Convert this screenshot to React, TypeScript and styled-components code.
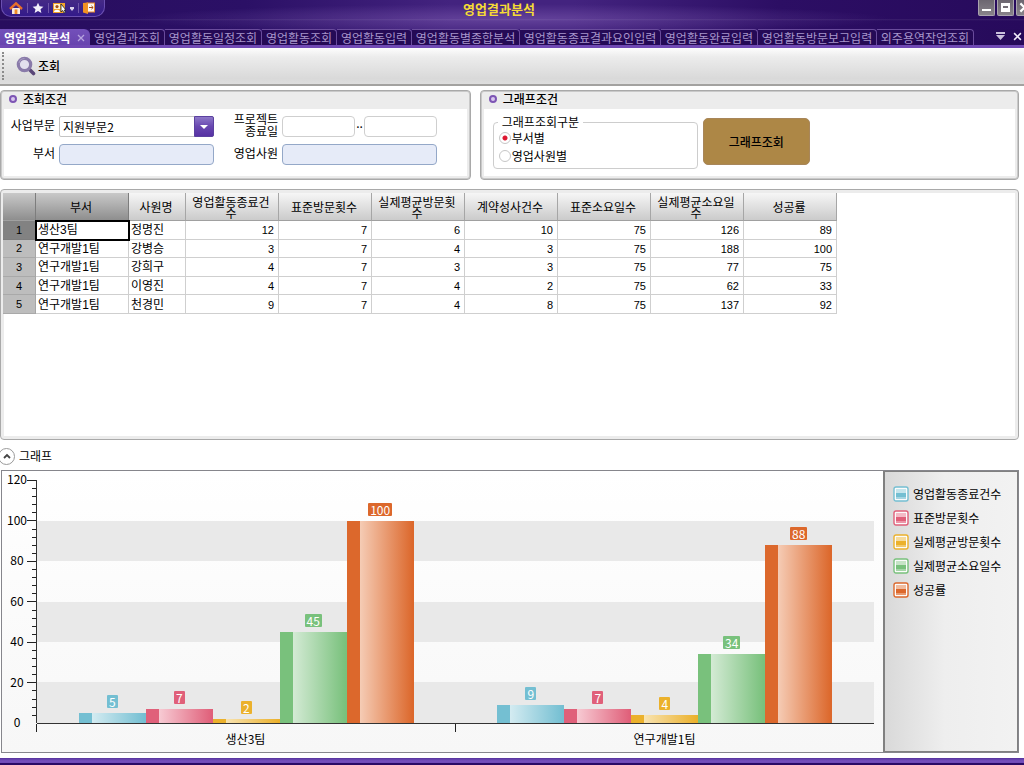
import React, { useState } from "react";
import styled, { createGlobalStyle } from "styled-components";

const GlobalStyle = createGlobalStyle`
  * { box-sizing: border-box; }
  html, body { margin: 0; padding: 0; }
  body {
    background: #fff;
    color: #000;
    font-family: "Noto Sans CJK KR", "Noto Sans", sans-serif;
    font-size: 12px;
    line-height: 14px;
    overflow-x: hidden;
  }
  button, input, select { font: inherit; color: inherit; margin: 0; }
`;

/* ---------- data ---------- */

const tabs = [
  "영업결과조회",
  "영업활동일정조회",
  "영업활동조회",
  "영업활동입력",
  "영업활동별종합분석",
  "영업활동종료결과요인입력",
  "영업활동완료입력",
  "영업활동방문보고입력",
  "외주용역작업조회",
];

const headers = [
  "부서",
  "사원명",
  "영업활동종료건수",
  "표준방문횟수",
  "실제평균방문횟수",
  "계약성사건수",
  "표준소요일수",
  "실제평균소요일수",
  "성공률",
];

const rows: [string, string, ...number[]][] = [
  ["생산3팀", "정명진", 12, 7, 6, 10, 75, 126, 89],
  ["연구개발1팀", "강병승", 3, 7, 4, 3, 75, 188, 100],
  ["연구개발1팀", "강희구", 4, 7, 3, 3, 75, 77, 75],
  ["연구개발1팀", "이영진", 4, 7, 4, 2, 75, 62, 33],
  ["연구개발1팀", "천경민", 9, 7, 4, 8, 75, 137, 92],
];

const series = [
  { name: "영업활동종료건수", color: "#74bfd2", light: "#d3ebf1" },
  { name: "표준방문횟수", color: "#e0607a", light: "#f7cad3" },
  { name: "실제평균방문횟수", color: "#ebb12c", light: "#f8e3b0" },
  { name: "실제평균소요일수", color: "#79c17c", light: "#d3ead4" },
  { name: "성공률", color: "#dc682c", light: "#f5cbb4" },
];

const groups = [
  { name: "생산3팀", values: [5, 7, 2, 45, 100] },
  { name: "연구개발1팀", values: [9, 7, 4, 34, 88] },
];

const axisMax = 120;
const axisSteps = [120, 100, 80, 60, 40, 20];

/* ---------- frame ---------- */

const Page = styled.div`
  display: flex;
  flex-direction: column;
  min-height: 100vh;
`;

const TitleBar = styled.header`
  display: grid;
  grid-template-columns: 1fr auto 1fr;
  height: 29px;
  overflow: hidden;
  background:
    linear-gradient(transparent 19px, rgba(255, 255, 255, 0.08) 19px, transparent 21px),
    radial-gradient(ellipse 380px 15px at 50% 19px, rgba(130, 95, 180, 0.5), transparent),
    linear-gradient(90deg, #280d5e 0%, #2b1066 24%, #43237f 44%, #43237f 56%, #2c0e64 76%, #270a5c 100%);
`;

const QuickBar = styled.nav`
  display: flex;
  align-items: center;
  justify-self: start;
  width: 104px;
  height: 17px;
  margin-left: 1px;
  padding: 0 7px;
  gap: 4px;
  border: 1px solid #6a4fb0;
  border-top: 0;
  border-radius: 0 0 10px 10px;
  background: linear-gradient(#452a86, #331a8a);
`;

const QuickButton = styled.button`
  display: flex;
  padding: 0;
  border: 0;
  background: none;
`;

const QuickDivider = styled.span`
  width: 1px;
  height: 10px;
  background: #6f55a8;
`;

const WindowTitle = styled.h1`
  margin: 0;
  padding-right: 26px;
  font-size: 13px;
  line-height: 17px;
  font-weight: 700;
  color: #f6dc35;
`;

const WindowButtons = styled.div`
  display: flex;
  justify-self: end;
  gap: 2px;
  margin-right: -9px;
`;

const WindowButton = styled.button`
  display: flex;
  align-items: center;
  justify-content: center;
  width: 17px;
  height: 16px;
  padding: 0;
  border: 1px solid #aaa3ae;
  border-top: 0;
  border-radius: 0 0 2px 2px;
  background: linear-gradient(#6c6670, #88838a);
`;

const TabStrip = styled.nav`
  display: flex;
  align-items: flex-start;
  height: 19px;
  background: linear-gradient(90deg, #2d1068, #3a1b78 50%, #260a5a);
  border-bottom: 3px solid #7049b4;
  overflow: hidden;
`;

const ActiveTab = styled.div`
  display: flex;
  align-items: center;
  justify-content: space-between;
  width: 90px;
  height: 16px;
  flex: none;
  padding: 2px 5px 0 4px;
  border-radius: 0 6px 0 0;
  background: linear-gradient(#7350ba, #6844ae);
  color: #fff;
  font-weight: 700;
  white-space: nowrap;
`;

const TabClose = styled.button`
  display: flex;
  padding: 0;
  border: 0;
  background: none;
`;

const Tab = styled.a<{ $chars: number }>`
  flex: none;
  width: ${(p) => p.$chars * 11 + 9}px;
  height: 16px;
  padding-top: 1px;
  border: 1px solid #6a4c9c;
  border-width: 1px 1px 0 0;
  border-radius: 0 4px 0 0;
  background: #250a56;
  color: #a795cb;
  text-align: center;
  text-decoration: none;
  white-space: nowrap;
`;

const TabTools = styled.div`
  display: flex;
  gap: 8px;
  margin-left: auto;
  padding: 3px 2px 0 0;
`;

const Toolbar = styled.div`
  display: flex;
  align-items: center;
  height: 38px;
  padding-left: 2px;
  background: linear-gradient(#fdfdfd, #ececec 25%, #d9d9d9 85%, #dedede);
  border-bottom: 2px solid #a3a2a0;
`;

const Grip = styled.span`
  height: 28px;
  width: 14px;
  border-left: 2px dotted #8b8b8b;
`;

const ToolbarButton = styled.button`
  display: flex;
  align-items: center;
  gap: 2px;
  padding: 0;
  border: 0;
  background: none;
  font-weight: 500;
`;

const Main = styled.main`
  display: flex;
  flex: 1;
  flex-direction: column;
  padding: 4px 5px 5px 0;
`;

const BottomBar = styled.footer`
  height: 7px;
  background: linear-gradient(#55319c, #7650be 3px, #6f48b6 5px, #2a0a66 5px);
`;

/* ---------- condition panels ---------- */

const Conditions = styled.div`
  display: flex;
  gap: 9px;
  margin-bottom: 9px;
`;

const Panel = styled.section<{ $basis?: string }>`
  flex: ${(p) => (p.$basis ? `0 0 ${p.$basis}` : "1")};
  min-width: 0;
  padding: 0 3px 3px;
  border: 1px solid #a9a9a9;
  border-radius: 4px;
  background: #ececec;
  box-shadow: inset 0 0 0 1px #c9c9c9;
`;

const PanelTitle = styled.h2`
  display: flex;
  align-items: center;
  gap: 6px;
  height: 18px;
  margin: 0;
  padding: 0 0 2px 5px;
  font-size: 12px;
  font-weight: 500;
`;

const Bullet = styled.span`
  width: 8px;
  height: 8px;
  border: 2px solid #7d55b4;
  border-radius: 50%;
  background: #d9c8ee;
`;

const PanelBody = styled.div`
  height: 67px;
  background: #fff;
`;

const SearchForm = styled(PanelBody)`
  display: grid;
  grid-template-columns: 45px 155px 60px 155px;
  grid-template-rows: 21px 21px;
  gap: 7px 4px;
  align-items: center;
  padding: 7px 0 0 6px;
`;

const FieldLabel = styled.label`
  padding-bottom: 3px;
  line-height: 12px;
  text-align: right;
  word-break: keep-all;
`;

const TextField = styled.input<{ $lookup?: boolean }>`
  width: 100%;
  min-width: 0;
  height: 21px;
  padding: 0 4px;
  border: 1px solid ${(p) => (p.$lookup ? "#94a8c8" : "#cfcfcf")};
  border-radius: 4px;
  background: ${(p) => (p.$lookup ? "#e6ebf8" : "#fff")};
`;

const DateRange = styled.div`
  display: grid;
  grid-template-columns: 1fr 9px 1fr;
  text-align: center;
`;

const SelectBox = styled.div`
  position: relative;
`;

const Select = styled.select`
  display: block;
  width: 100%;
  height: 21px;
  padding: 0 24px 0 3px;
  border: 1px solid #c4c4c4;
  border-radius: 2px;
  background: #fff;
  appearance: none;
`;

const SelectArrow = styled.span`
  position: absolute;
  top: 0;
  right: 0;
  display: flex;
  align-items: center;
  justify-content: center;
  width: 20px;
  height: 21px;
  border: 1px solid #5b41a0;
  border-radius: 0 2px 2px 0;
  background: linear-gradient(#8d78c8, #6847b0 50%, #5732a4);
  pointer-events: none;
`;

const GraphForm = styled(PanelBody)`
  display: flex;
  gap: 5px;
  padding: 6px 0 0 9px;
`;

const RadioGroup = styled.fieldset`
  width: 205px;
  height: 54px;
  margin: 0;
  padding: 0 5px;
  border: 1px solid #cdcdcd;
  border-radius: 4px;
`;

const Legend = styled.legend`
  padding: 0 4px;
  margin-left: -1px;
`;

const RadioLabel = styled.label`
  display: flex;
  align-items: center;
  gap: 1px;
  height: 18px;
`;

const Radio = styled.input`
  appearance: none;
  width: 12px;
  height: 12px;
  border: 1px solid #c6c6c6;
  border-radius: 50%;
  background: #fff;
  &:checked {
    background: radial-gradient(circle, #dd1730 0 2px, #fff 3px);
  }
`;

const GraphButton = styled.button`
  width: 107px;
  height: 47px;
  margin-top: 3px;
  border: 1px solid #a8865a;
  border-radius: 5px;
  background: #ad8746;
  font-weight: 500;
`;

/* ---------- data grid ---------- */

const GridPanel = styled.section`
  flex: 1;
  min-height: 251px;
  padding: 3px 2px 2px;
  border: 1px solid #a9a9a9;
  border-radius: 4px;
  background: #fff;
  box-shadow: inset 0 0 0 3px #ececec;
`;

const Table = styled.table`
  width: 834px;
  height: 121px;
  table-layout: fixed;
  border-collapse: separate;
  border-spacing: 0;
`;

const HeadCell = styled.th<{ $w: number; $dark?: boolean }>`
  width: ${(p) => p.$w}px;
  height: 28px;
  padding: 0 5px 0 3px;
  border-right: 1px solid ${(p) => (p.$dark ? "#7d7d7d" : "#a6a6a6")};
  border-bottom: 1px solid #a0a0a0;
  background: ${(p) =>
    p.$dark ? "linear-gradient(#c9c9c9, #8e8e8e)" : "linear-gradient(#f6f6f6, #cbcbcb)"};
  font-weight: 400;
  line-height: 11px;
  word-break: break-all;
`;

const RowHead = styled.th<{ $current?: boolean }>`
  padding: 0;
  border-right: 1px solid #a6a6a6;
  border-bottom: 1px solid ${(p) => (p.$current ? "#7d7d7d" : "#a9a9a9")};
  background: ${(p) => (p.$current ? "#828282" : "#bdbdbd")};
  font: 400 11px/14px "Liberation Sans", sans-serif;
`;

const Cell = styled.td<{ $num?: boolean; $focus?: boolean }>`
  padding: ${(p) => (p.$num ? "1px 4px 0" : "1px 2px 0")};
  border-right: 1px solid #cfcfcf;
  border-bottom: 1px solid #cfcfcf;
  outline: ${(p) => (p.$focus ? "2px solid #000" : "none")};
  outline-offset: -1px;
  font-family: "Liberation Sans", "Noto Sans CJK KR", sans-serif;
  font-size: ${(p) => (p.$num ? 11 : 12)}px;
  text-align: ${(p) => (p.$num ? "right" : "left")};
  white-space: nowrap;
`;

/* ---------- chart ---------- */

const GraphTitle = styled.h2`
  display: flex;
  align-items: center;
  gap: 4px;
  height: 30px;
  margin: 0 0 0 -2px;
  padding-top: 2px;
  font-size: 12px;
  font-weight: 400;
`;

const CollapseButton = styled.button`
  display: flex;
  align-items: center;
  justify-content: center;
  width: 17px;
  height: 17px;
  padding: 0;
  border: 1px solid #9a9a9a;
  border-radius: 50%;
  background: #fff;
`;

const ChartPanel = styled.section`
  display: flex;
  margin-left: 1px;
  border: 1px solid #86868c;
  background: linear-gradient(#fff, #f7f7f7);
`;

const ChartArea = styled.div`
  display: flex;
  flex: 1;
  padding: 9px 9px 0 0;
`;

const ValueAxis = styled.div`
  display: flex;
  flex-direction: column;
  width: 26px;
  height: 243px;
  padding-left: 4px;
  text-align: center;
`;

const AxisLabel = styled.span`
  flex: 1;
  margin-top: -8px;
  margin-bottom: 8px;
`;

const AxisZero = styled.span`
  height: 0;
  margin-top: -8px;
  margin-bottom: 8px;
`;

const Ticks = styled.div`
  display: flex;
  flex-direction: column;
  align-items: flex-end;
  width: 9px;
  height: 243px;
  border-right: 1px solid #333;
`;

const Tick = styled.span<{ $major: boolean }>`
  flex: 1;
  width: ${(p) => (p.$major ? 9 : 4)}px;
  border-top: 1px solid #222;
`;

const PlotColumn = styled.div`
  flex: 1;
`;

const Plot = styled.div`
  display: flex;
  height: 244px;
  border-bottom: 1px solid #333;
  background: repeating-linear-gradient(
    to top,
    #e9e9e9 0 calc(100% / 6),
    transparent calc(100% / 6) calc(100% / 3)
  );
`;

const BarGroup = styled.div`
  display: flex;
  flex: 1;
  min-width: 0;
  padding: 0 5%;
`;

const BarSlot = styled.div`
  display: flex;
  flex: 1;
  flex-direction: column;
  align-items: center;
  justify-content: flex-end;
`;

const BarValue = styled.span<{ $color: string }>`
  flex: none;
  margin-bottom: 5px;
  padding: 0 2px;
  border-radius: 1px;
  line-height: 13px;
  background: ${(p) => p.$color};
  color: #fff;
`;

const Bar = styled.div<{ $color: string; $light: string }>`
  flex: none;
  width: 100%;
  background: linear-gradient(
    90deg,
    ${(p) => p.$color} 19%,
    ${(p) => p.$light} 20%,
    ${(p) => p.$color} 98%
  );
`;

const CategoryAxis = styled.div`
  display: flex;
  margin-left: -1px;
`;

const Category = styled.div`
  flex: 1;
  height: 28px;
  padding-top: 8px;
  text-align: center;
  background: linear-gradient(#222, #222) 0 0 / 1px 8px no-repeat;
`;

const SeriesLegend = styled.ul`
  display: flex;
  flex-direction: column;
  gap: 10px;
  width: 135px;
  margin: 0;
  padding: 15px 0 0 8px;
  border: 2px solid #808080;
  border-width: 1px 1px 1px 2px;
  background: linear-gradient(90deg, #d9d9d9, #eeeeee 45%, #f2f2f2);
  list-style: none;
`;

const LegendItem = styled.li`
  display: flex;
  align-items: center;
  gap: 4px;
  height: 14px;
  white-space: nowrap;
`;

/* ---------- icons ---------- */

const HomeIcon = () => (
  <svg width="14" height="12" viewBox="0 0 14 12" aria-hidden="true">
    <path d="M3 6h8v6H3z" fill="#f5e8e0" />
    <path d="M1 7l6-5.6L13 7" fill="none" stroke="#e8702a" strokeWidth="2.4" />
    <path d="M5.6 7.4h2.8V12H5.6z" fill="#f08a24" />
  </svg>
);

const StarIcon = () => (
  <svg width="12" height="12" viewBox="0 0 12 12" aria-hidden="true">
    <path d="M6 .8l1.6 3.5 3.8.4-2.9 2.5.9 3.8L6 9.1 2.6 11l.9-3.8L.6 4.7l3.8-.4z" fill="#f3effa" />
  </svg>
);

const UserIcon = () => (
  <svg width="13" height="12" viewBox="0 0 13 12" aria-hidden="true">
    <rect x="0" y="1" width="12" height="10" fill="#f2a22c" />
    <rect x="1" y="2" width="6" height="5" fill="#fff0cf" />
    <circle cx="4" cy="4.6" r="1.6" fill="#a85418" />
    <path d="M1 10c0-3 6-3 6 0z" fill="#fff" />
    <path d="M8 2v8l1.7-1.6L11 11l1.4-.7-1.2-2.3H13z" fill="#fff" stroke="#222" strokeWidth=".8" />
  </svg>
);

const ExitIcon = () => (
  <svg width="12" height="12" viewBox="0 0 12 12" aria-hidden="true">
    <rect x="4" y="1" width="7.5" height="9" fill="#fdf6ee" stroke="#e98a2e" />
    <path d="M0 1l5-.6V12l-5-1.6z" fill="#f29222" />
    <path d="M6 5.5h4M8.4 3.8l1.8 1.7-1.8 1.7" fill="none" stroke="#a24b18" />
  </svg>
);

const SearchIcon = () => (
  <svg width="20" height="20" viewBox="0 0 20 20" aria-hidden="true">
    <path d="M13.5 13.5l4 4" stroke="#5a4778" strokeWidth="3.6" strokeLinecap="round" />
    <circle cx="8.5" cy="8.5" r="6.2" fill="#e3e0ee" stroke="#897aa9" strokeWidth="3.2" />
    <path d="M3 7a6 6 0 0 1 5.5-4.5" fill="none" stroke="#a79bc2" strokeWidth="1.2" />
  </svg>
);

const CrossIcon = ({ color, size = 8, weight = 1.6 }: { color: string; size?: number; weight?: number }) => (
  <svg width={size} height={size} viewBox="0 0 8 8" aria-hidden="true">
    <path d="M1 1l6 6M7 1L1 7" stroke={color} strokeWidth={weight} fill="none" />
  </svg>
);

const Swatch = ({ color, light }: { color: string; light: string }) => (
  <svg width="16" height="16" viewBox="0 0 16 16" aria-hidden="true">
    <rect x="1" y="1" width="14" height="14" rx="2" fill="#fbfbfb" stroke={color} strokeWidth="1.4" />
    <rect x="3" y="3" width="10" height="10" fill={color} />
    <rect x="3" y="3" width="10" height="4" fill={light} opacity=".85" />
    <rect x="3" y="11" width="10" height="2" fill={light} opacity=".5" />
  </svg>
);

/* ---------- page ---------- */

export default function App() {
  const [groupBy, setGroupBy] = useState("dept");

  return (
    <Page>
      <GlobalStyle />
      <TitleBar>
        <QuickBar>
          <QuickButton aria-label="홈"><HomeIcon /></QuickButton>
          <QuickDivider />
          <QuickButton aria-label="즐겨찾기"><StarIcon /></QuickButton>
          <QuickDivider />
          <QuickButton aria-label="사용자">
            <UserIcon />
            <svg width="8" height="12" viewBox="0 0 8 12" aria-hidden="true">
              <path d="M4 5h4v1.5L6 9 4 6.5z" fill="#d9d0ea" />
            </svg>
          </QuickButton>
          <QuickDivider />
          <QuickButton aria-label="종료"><ExitIcon /></QuickButton>
        </QuickBar>
        <WindowTitle>영업결과분석</WindowTitle>
        <WindowButtons>
          <WindowButton aria-label="최소화">
            <svg width="11" height="11" viewBox="0 0 11 11" aria-hidden="true">
              <rect x="1" y="7" width="9" height="2" fill="#fff" />
            </svg>
          </WindowButton>
          <WindowButton aria-label="최대화">
            <svg width="11" height="11" viewBox="0 0 11 11" aria-hidden="true">
              <rect x="1" y="1" width="9" height="9" fill="#fff" />
              <rect x="3" y="4" width="5" height="2" fill="#756f78" />
            </svg>
          </WindowButton>
          <WindowButton aria-label="닫기"><CrossIcon color="#fff" size={11} /></WindowButton>
        </WindowButtons>
      </TitleBar>

      <TabStrip>
        <ActiveTab>
          영업결과분석
          <TabClose aria-label="탭 닫기"><CrossIcon color="#b6a3df" weight={1.3} /></TabClose>
        </ActiveTab>
        {tabs.map((t) => (
          <Tab key={t} href="#" $chars={t.length}>{t}</Tab>
        ))}
        <TabTools>
          <TabClose aria-label="탭 목록">
            <svg width="9" height="8" viewBox="0 0 9 8" aria-hidden="true">
              <path d="M0 0h9v2H0zM0 3h9L4.5 8z" fill="#c9c0dc" />
            </svg>
          </TabClose>
          <TabClose aria-label="모두 닫기"><CrossIcon color="#f2eefa" size={9} weight={1.4} /></TabClose>
        </TabTools>
      </TabStrip>

      <Toolbar>
        <Grip />
        <ToolbarButton><SearchIcon />조회</ToolbarButton>
      </Toolbar>

      <Main>
        <Conditions>
          <Panel $basis="46.2%">
            <PanelTitle><Bullet />조회조건</PanelTitle>
            <SearchForm>
              <FieldLabel htmlFor="division">사업부문</FieldLabel>
              <SelectBox>
                <Select id="division" defaultValue="지원부문2">
                  <option>지원부문2</option>
                </Select>
                <SelectArrow>
                  <svg width="8" height="4" viewBox="0 0 8 4" aria-hidden="true">
                    <path d="M0 0h8L4 4z" fill="#fff" />
                  </svg>
                </SelectArrow>
              </SelectBox>
              <FieldLabel htmlFor="end-from">프로젝트 종료일</FieldLabel>
              <DateRange>
                <TextField id="end-from" />
                <span>..</span>
                <TextField aria-label="종료일 끝" />
              </DateRange>
              <FieldLabel htmlFor="dept">부서</FieldLabel>
              <TextField id="dept" $lookup />
              <FieldLabel htmlFor="staff">영업사원</FieldLabel>
              <TextField id="staff" $lookup />
            </SearchForm>
          </Panel>
          <Panel>
            <PanelTitle><Bullet />그래프조건</PanelTitle>
            <GraphForm>
              <RadioGroup>
                <Legend>그래프조회구분</Legend>
                <RadioLabel>
                  <Radio type="radio" name="by" checked={groupBy === "dept"} onChange={() => setGroupBy("dept")} />
                  부서별
                </RadioLabel>
                <RadioLabel>
                  <Radio type="radio" name="by" checked={groupBy === "staff"} onChange={() => setGroupBy("staff")} />
                  영업사원별
                </RadioLabel>
              </RadioGroup>
              <GraphButton>그래프조회</GraphButton>
            </GraphForm>
          </Panel>
        </Conditions>

        <GridPanel>
          <Table>
            <thead>
              <tr>
                <HeadCell $w={33} $dark />
                {headers.map((h, i) => (
                  <HeadCell key={h} $w={i === 1 ? 57 : 93} $dark={i === 0}>{h}</HeadCell>
                ))}
              </tr>
            </thead>
            <tbody>
              {rows.map((row, r) => (
                <tr key={r}>
                  <RowHead $current={r === 0}>{r + 1}</RowHead>
                  {row.map((value, c) => (
                    <Cell key={c} $num={c > 1} $focus={r === 0 && c === 0}>{value}</Cell>
                  ))}
                </tr>
              ))}
            </tbody>
          </Table>
        </GridPanel>

        <GraphTitle>
          <CollapseButton aria-label="그래프 접기">
            <svg width="8" height="6" viewBox="0 0 8 6" aria-hidden="true">
              <path d="M1 5l3-3 3 3" fill="none" stroke="#444" strokeWidth="1.8" />
            </svg>
          </CollapseButton>
          그래프
        </GraphTitle>

        <ChartPanel>
          <ChartArea>
            <ValueAxis>
              {axisSteps.map((s) => (
                <AxisLabel key={s}>{s}</AxisLabel>
              ))}
              <AxisZero>0</AxisZero>
            </ValueAxis>
            <Ticks>
              {Array.from({ length: 30 }, (_, i) => (
                <Tick key={i} $major={i % 5 === 0} />
              ))}
            </Ticks>
            <PlotColumn>
              <Plot>
                {groups.map((g) => (
                  <BarGroup key={g.name}>
                    {g.values.map((v, i) => (
                      <BarSlot key={i}>
                        <BarValue $color={series[i].color}>{v}</BarValue>
                        <Bar
                          $color={series[i].color}
                          $light={series[i].light}
                          style={{ height: `${(v / axisMax) * 100}%` }}
                        />
                      </BarSlot>
                    ))}
                  </BarGroup>
                ))}
              </Plot>
              <CategoryAxis>
                {groups.map((g) => (
                  <Category key={g.name}>{g.name}</Category>
                ))}
              </CategoryAxis>
            </PlotColumn>
          </ChartArea>
          <SeriesLegend>
            {series.map((s) => (
              <LegendItem key={s.name}>
                <Swatch color={s.color} light={s.light} />
                {s.name}
              </LegendItem>
            ))}
          </SeriesLegend>
        </ChartPanel>
      </Main>
      <BottomBar />
    </Page>
  );
}
